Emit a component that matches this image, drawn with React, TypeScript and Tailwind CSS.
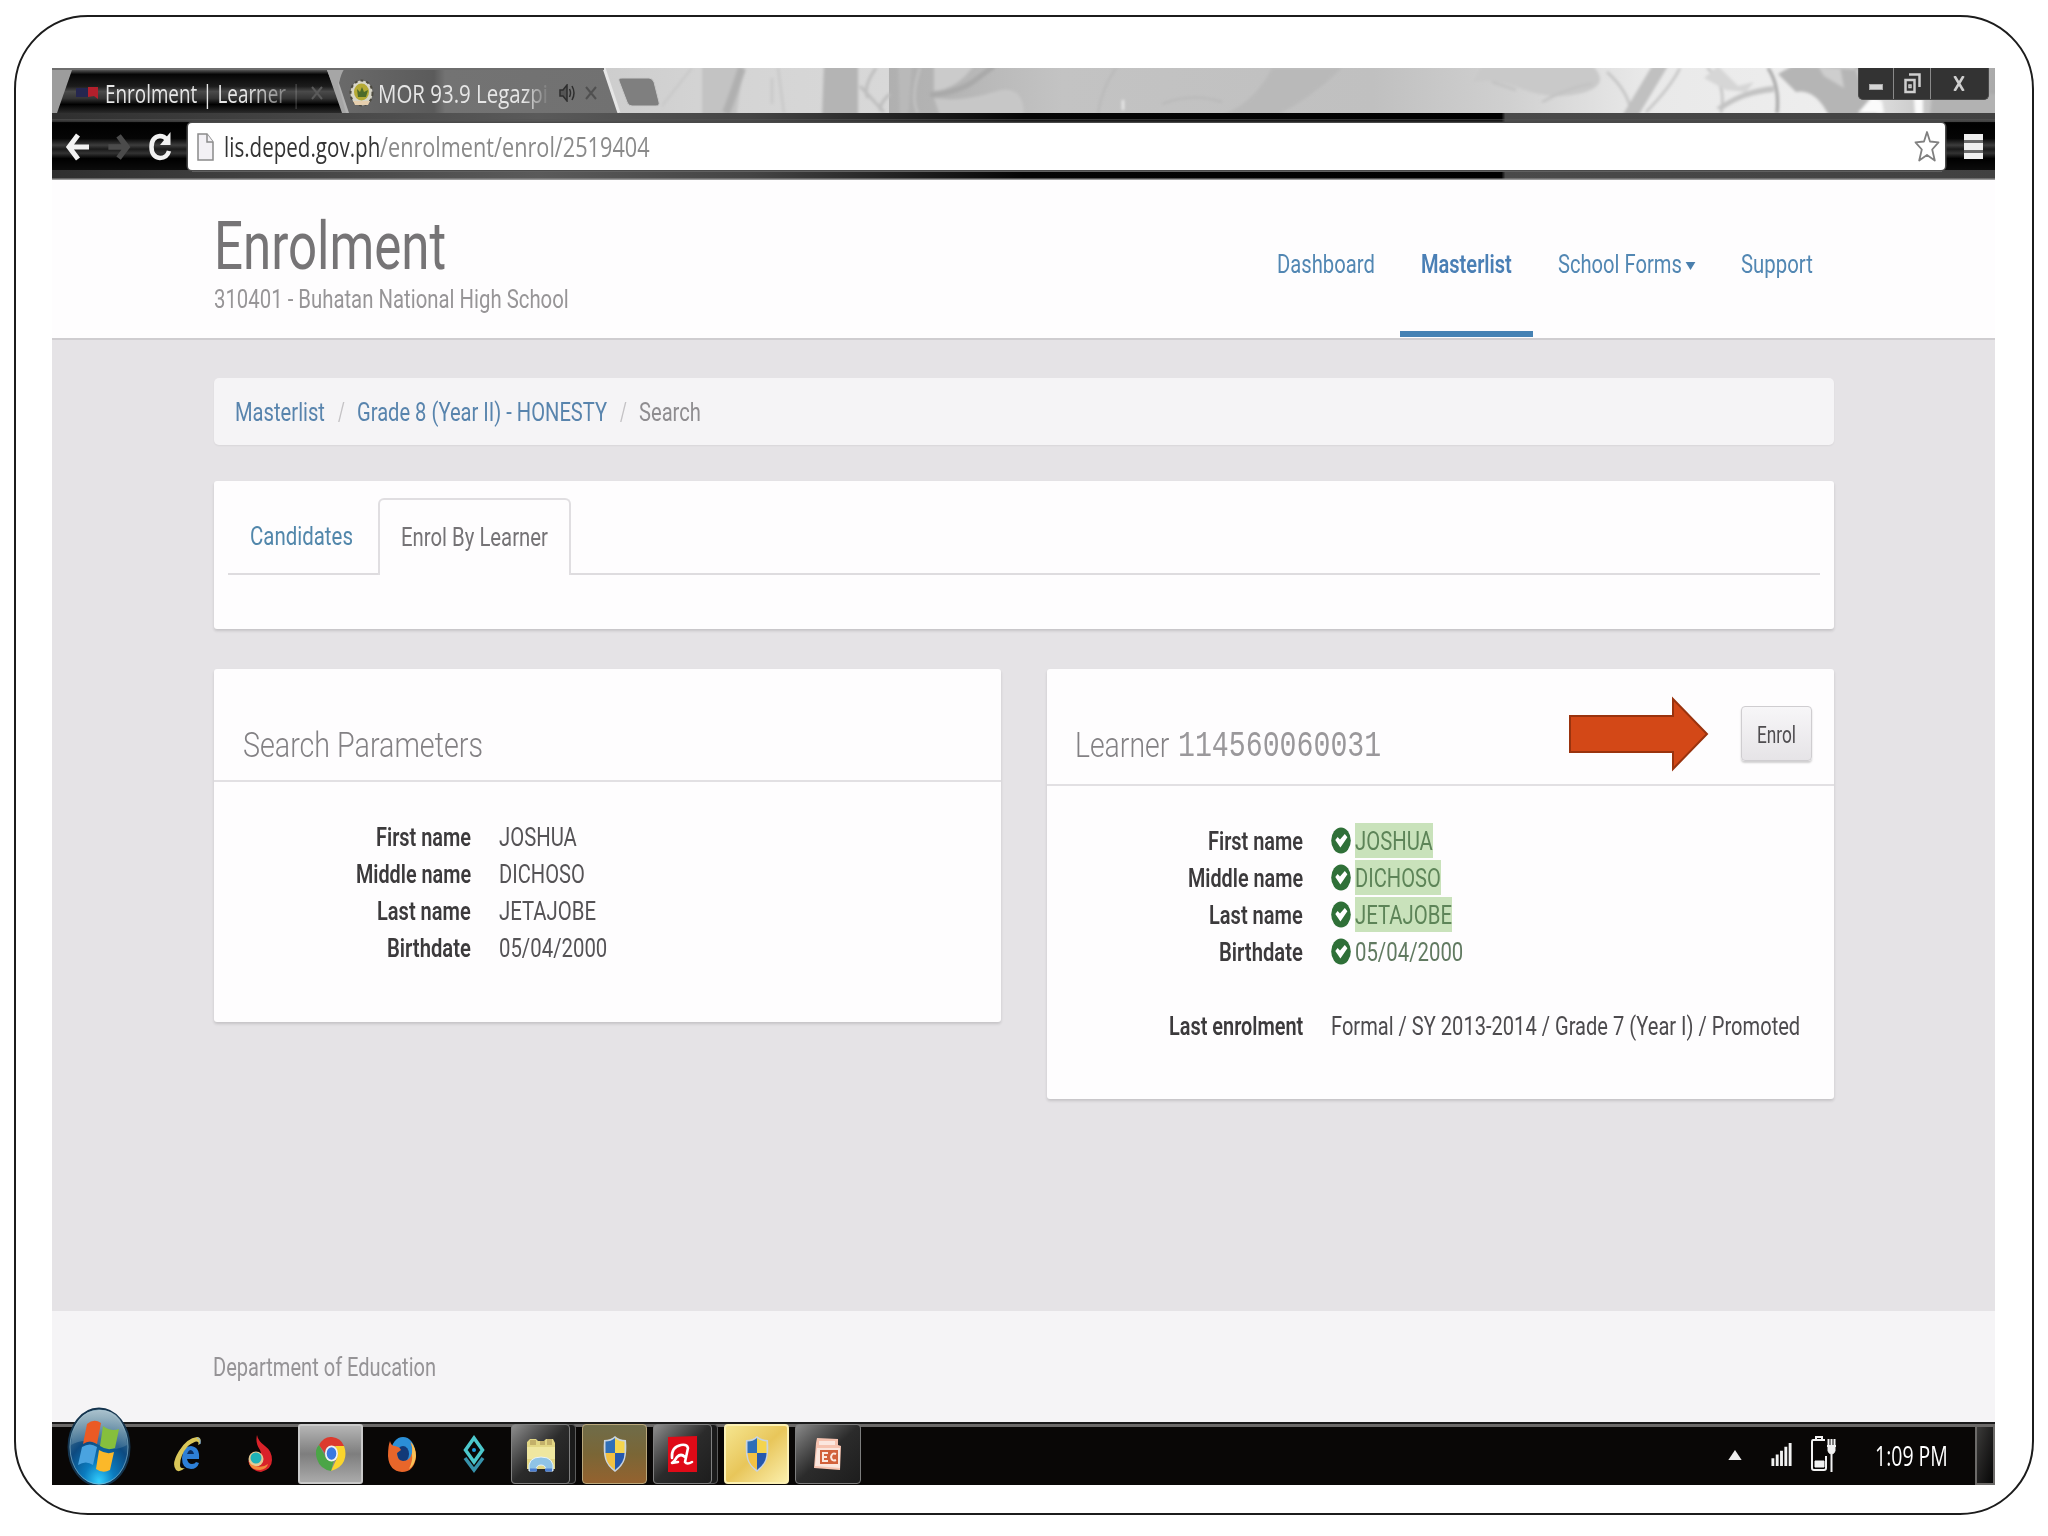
import { useLayoutEffect, useRef, useState } from "react";
import type { ReactNode } from "react";

/** Single line of text condensed horizontally to a given width. */
function Fit({ w, className = "", children }: { w: number; className?: string; children: ReactNode }) {
  const ref = useRef<HTMLSpanElement>(null);
  const [scale, setScale] = useState(1);
  useLayoutEffect(() => {
    if (ref.current && ref.current.offsetWidth) setScale(w / ref.current.offsetWidth);
  }, [w]);
  return (
    <span className={`inline-flex shrink-0 ${className}`} style={{ width: w }}>
      <span ref={ref} className="inline-block shrink-0 origin-left whitespace-nowrap" style={{ transform: `scaleX(${scale})` }}>
        {children}
      </span>
    </span>
  );
}

function TabStripArt() {
  return (
    <svg className="absolute inset-0" width="1943" height="45" viewBox="0 0 1943 45">
      <defs>
        <linearGradient id="strip" x1="0" x2="1">
          <stop offset="0" stopColor="#8f8f8f" />
          <stop offset=".25" stopColor="#c9c9c9" />
          <stop offset=".34" stopColor="#d4d4d4" />
          <stop offset=".4305" stopColor="#d8d8d8" />
          <stop offset=".431" stopColor="#b0b0b0" />
          <stop offset=".46" stopColor="#b4b4b4" />
          <stop offset=".52" stopColor="#c3c3c3" />
          <stop offset=".68" stopColor="#c0c0c0" />
          <stop offset=".75" stopColor="#d0d0d0" />
          <stop offset=".82" stopColor="#e9e9e9" />
          <stop offset=".92" stopColor="#eeeeee" />
          <stop offset="1" stopColor="#a9a9a9" />
        </linearGradient>
        <linearGradient id="tabA" x1="0" x2="0" y1="0" y2="1">
          <stop offset="0" stopColor="#555" />
          <stop offset=".1" stopColor="#050505" />
          <stop offset=".38" stopColor="#1c1c1c" />
          <stop offset=".5" stopColor="#4a4a4a" />
          <stop offset=".66" stopColor="#343434" />
          <stop offset=".8" stopColor="#000" />
          <stop offset="1" stopColor="#2b2b2b" />
        </linearGradient>
        <linearGradient id="tabB" x1="0" x2="1">
          <stop offset="0" stopColor="#6a6a6a" />
          <stop offset=".34" stopColor="#5b5b5b" />
          <stop offset=".38" stopColor="#737373" />
          <stop offset="1" stopColor="#717171" />
        </linearGradient>
        <filter id="soft" x="-5%" y="-20%" width="110%" height="140%">
          <feGaussianBlur stdDeviation="1.5" />
        </filter>
      </defs>
      <rect width="1943" height="45" fill="url(#strip)" />
      <g filter="url(#soft)" fill="none">
        <path d="M650 -4h42l-8 53h-34z" fill="#c3c3c3" />
        <path d="M772 -4h34v53h-36z" fill="#b4b4b4" />
        <path d="M846 -4h14l-4 53h-8z" fill="#b9b9b9" />
        <path d="M640 0q-20 25-30 38M720 10v26M726 0l6 45M868 0q-10 30-2 45" stroke="#c6c6c6" strokeWidth="2" />
        <path d="M690 0q-10 30-16 45" stroke="#b0b0b0" strokeWidth="8" />
        <path d="M808 18l24 26M824 0q-14 20-8 30M838 26q-10 8-10 17" stroke="#bdbdbd" strokeWidth="3" />
        <path d="M882 -3h40q-16 24-40 26z" fill="#cbcbcb" />
        <path d="M882 30q30 4 60-6t30 24h-84z" fill="#c7c7c7" />
        <path d="M878 27Q910 24 926 10L942 -2" stroke="#a9a9a9" strokeWidth="5" />
        <path d="M1064 0q-14 20-18 45M1110 36q30-12 60-2" stroke="#b8b8b8" strokeWidth="2" />
        <path d="M1071 32v10" stroke="#f4f4f4" strokeWidth="2" />
        <path d="M1220 0q-20 40-60 50h60q40-20 70-50z" fill="#b9b9b9" />
        <path d="M1430 -3h110q20 20-10 28t-60-4-50-6z" fill="#c9c9c9" />
        <path d="M1440 14l24 8M1490 34q30-16 50-18M1555 4q22 20 24 41M1612 0q-14 28-32 45M1628 0q-10 20-34 44M1655 0q20 14 14 45" stroke="#c2c2c2" strokeWidth="2.5" />
        <path d="M1600 -2h16l-30 50h-16z" fill="#c0c0c0" />
        <path d="M1664 40q28-20 58-22v6q-30 2-52 18z" fill="#c2c2c2" />
        <path d="M1652 10l14-12 20 20 16-4-8 10-20-2z" fill="#d6d6d6" />
        <path d="M1716 0q12 18 9 45" stroke="#a2a2a2" strokeWidth="3" />
        <path d="M1726 6l14-8h70l16 52h-48q-14-30-34-26z" fill="#b5b5b5" />
        <path d="M1752 -2h14l6 10 20 12-4-22h14l10 24 10-30h40v12h-20z" fill="#d9d9d9" opacity=".7" />
        <path d="M1806 45l14-16 10 4 2 12zM1862 30h9v18h-8z" fill="#fbfbfb" />
        <path d="M1880 26h70v22h-72z" fill="#b2b2b2" />
      </g>
      <path d="M0 45V0h22L6 45z" fill="#9c9c9c" />
      <path d="M5 45L20 2h255l17 43z" fill="url(#tabA)" />
      <path d="M275 2h18q-5 6-7 14l8 29h-4z" fill="#a6a6a6" />
      <path d="M286 0h266l16 45H297l-10-30q2-10 6-15z" fill="url(#tabB)" />
      <path d="M552 0l15 45" stroke="#e6e6e6" strokeWidth="3" />
      <path d="M567 13q-1-3 3-3h27q3 0 5 4l5 20q1 4-3 4h-24q-4 0-5-4z" fill="#7f7f7f" stroke="#c9c9c9" />
      <rect width="552" height="2" fill="#6e6e6e" />
    </svg>
  );
}

function ToolbarArt() {
  return (
    <svg className="absolute inset-0" width="1943" height="67" viewBox="0 0 1943 67" preserveAspectRatio="none">
      <defs>
        <linearGradient id="tb" x1="0" x2="0" y1="0" y2="1">
          <stop offset="0" stopColor="#3a3a3a" />
          <stop offset=".1" stopColor="#111" />
          <stop offset=".16" stopColor="#000" />
          <stop offset=".38" stopColor="#050505" />
          <stop offset=".48" stopColor="#3d3d3d" />
          <stop offset=".54" stopColor="#1a1a1a" />
          <stop offset=".6" stopColor="#333" />
          <stop offset=".68" stopColor="#000" />
          <stop offset=".93" stopColor="#111" />
          <stop offset="1" stopColor="#444" />
        </linearGradient>
        <linearGradient id="tbTop" x1="0" x2="1">
          <stop offset="0" stopColor="#2f2f2f" />
          <stop offset=".25" stopColor="#5a5a5a" />
          <stop offset=".36" stopColor="#444" />
          <stop offset=".5" stopColor="#050505" />
          <stop offset=".746" stopColor="#000" />
          <stop offset=".748" stopColor="#4a4a4a" />
          <stop offset="1" stopColor="#414141" />
        </linearGradient>
      </defs>
      <rect width="1943" height="67" fill="url(#tb)" />
      <rect width="1943" height="9" fill="url(#tbTop)" />
      <rect y="6" width="1943" height="1.5" fill="#555" opacity=".6" />
      <rect y="57" x="0" width="1943" height="9" fill="url(#tbTop)" />
      <rect y="57" x="140" width="1750" height="2" fill="#777" />
      <rect y="65.5" width="1943" height="1.5" fill="#999" />
    </svg>
  );
}

function WindowsOrb() {
  return (
    <svg className="absolute left-[15px] -top-[17px]" width="64" height="80" viewBox="0 0 64 80">
      <defs>
        <radialGradient id="orb" cx=".5" cy=".95" r=".85">
          <stop offset="0" stopColor="#33d0ff" />
          <stop offset=".3" stopColor="#0b7cc0" />
          <stop offset=".65" stopColor="#0d4a80" />
          <stop offset="1" stopColor="#51788f" />
        </radialGradient>
        <linearGradient id="orbTop" x1="0" x2="0" y1="0" y2="1">
          <stop offset="0" stopColor="#b9ced8" stopOpacity=".85" />
          <stop offset="1" stopColor="#7fa5b8" stopOpacity=".25" />
        </linearGradient>
      </defs>
      <ellipse cx="32" cy="40" rx="30.5" ry="38.5" fill="url(#orb)" stroke="#14344e" strokeWidth="2" />
      <ellipse cx="32" cy="40" rx="29" ry="37" fill="none" stroke="#8fb9cc" strokeOpacity=".6" />
      <path d="M4 38Q6 4 32 3t28 35Q46 46 32 38T4 38z" fill="url(#orbTop)" />
      <path d="M20 17q7-6 14-1l-4 21q-7-5-14 0z" fill="#ea5a24" />
      <path d="M36 19q8 6 16 3l-4 19q-8 3-15-2z" fill="#86bf3c" />
      <path d="M15 40q8-5 15 0l-4 18q-7-5-15 0z" fill="#4aa3e0" />
      <path d="M32 43q8 5 15 2l-4 18q-7 4-14-1z" fill="#fbb829" />
    </svg>
  );
}

function IeIcon() {
  return (
    <svg width="32" height="38" viewBox="0 0 32 38">
      <path d="M26 24H14q1 5 5 5 3 0 4-2l3 1q-2 6-8 6-9 0-9-11 1-12 9-12 9 1 8 13z" fill="#2d7fd6" />
      <path d="M14 19h7q-1-4-4-4-2 1-3 4z" fill="#0b2c5c" />
      <path d="M27 9q2-7-3-7Q14 3 6 16T3 35q3 3 9-2-5 1-5-3Q7 20 15 11q8-6 10-4 1 1 0 3z" fill="#d9c658" />
      <path d="M27 9q1-6-3-6" fill="none" stroke="#7fb2e8" />
    </svg>
  );
}

function FlameIcon() {
  return (
    <svg width="26" height="38" viewBox="0 0 26 38">
      <path d="M10 0q1 6 8 11t7 14-11 12Q3 36 1 25q4 6 8 4 8-4 4-14Q8 8 10 0z" fill="#d92229" />
      <circle cx="9" cy="24" r="7.5" fill="#e4c994" />
      <circle cx="9" cy="23" r="5.5" fill="#1eb3b8" />
      <path d="M2 28q2 7 11 7 7-1 8-6-8 6-19-1z" fill="#f28b3c" />
    </svg>
  );
}

function ChromeIcon() {
  return (
    <svg width="30" height="36" viewBox="0 0 30 36">
      <path d="M3 9Q8 0 16 1q9 1 12 9H15q-6 1-6 7z" fill="#dc3a2e" />
      <path d="M28 10q3 8 0 15t-13 10l6-13q2-6-2-12z" fill="#fad52d" />
      <path d="M3 9l7 13q4 4 8 2l-3 11Q4 33 1 23T3 9z" fill="#4ba547" />
      <ellipse cx="15.500" cy="17.500" rx="6.500" ry="8" fill="#f3f3f3" />
      <ellipse cx="15.500" cy="17.500" rx="4.800" ry="6.200" fill="#3a78e0" />
    </svg>
  );
}

function FirefoxIcon() {
  return (
    <svg width="30" height="37" viewBox="0 0 30 37">
      <ellipse cx="16" cy="16" rx="12" ry="15" fill="#2b8fd6" />
      <ellipse cx="16" cy="18" rx="6" ry="8" fill="#123a78" />
      <path d="M3 5q1 5 5 5 5 1 6 4l-4 3q0 7 6 8 7 0 9-8 1-6-2-11 6 5 6 15-2 15-14 15Q2 35 1 20 1 10 3 5z" fill="#e8662a" />
      <path d="M24 6q5 6 5 14-1 9-7 13 4-8 3-15 1-6-1-12z" fill="#f9c257" />
    </svg>
  );
}

function DiamondIcon() {
  return (
    <svg width="24" height="38" viewBox="0 0 24 38" fill="none">
      <path d="M12 3l8.500 12L12 27 3.500 15z" stroke="#4cc8cc" strokeWidth="3.500" />
      <circle cx="12" cy="15" r="2" fill="#1a9ee0" />
      <path d="M3 23l9 12 9-12" stroke="#3692ab" strokeWidth="3.500" />
    </svg>
  );
}

function FolderIcon() {
  return (
    <svg width="32" height="36" viewBox="0 0 32 36">
      <path d="M2 6l3-3h6l2 2h6l2-2h7l2 4v26H2z" fill="#e2d684" />
      <path d="M5 4h6v5H5zM15 5h5v4h-5zM22 3h5v6h-5z" fill="#c3b06a" />
      <path d="M2 11h28v12H2z" fill="#efe7a0" />
      <path d="M4 35q-2-14 12-14t12 14h-7q0-6-5-6t-5 6z" fill="#8fc3e6" stroke="#e7f3fa" />
      <path d="M5 34h7M20 34h7" stroke="#4c7fd0" strokeWidth="3" />
    </svg>
  );
}

function ShieldIcon() {
  return (
    <svg width="24" height="38" viewBox="0 0 24 38">
      <path d="M12 1q4 4 11 4 1 12-1 19t-10 13Q4 31 2 24T1 5q7 0 11-4z" fill="#c9d4df" />
      <path d="M12 3v15H2.500V6.500Q8 6.500 12 3z" fill="#2f6fb8" />
      <path d="M12 3q4 3.500 9.500 3.500V18H12z" fill="#f4d44e" />
      <path d="M2.500 18H12v17q-7-5-8.500-11z" fill="#f2c143" />
      <path d="M12 18h9.500q0 10-9.500 17z" fill="#2558ae" />
    </svg>
  );
}

function UmbrellaIcon() {
  return (
    <svg width="29" height="38" viewBox="0 0 29 38">
      <path d="M0 2l29-1v36H0z" fill="#df0a17" />
      <path d="M4 23Q3 12 13 10q6-1 7 3l-3 14q2 3 7 0M17 22q-4-4-8 0-3 5-5 6l6-1" fill="none" stroke="#fff" strokeWidth="2.600" strokeLinejoin="round" strokeLinecap="round" />
    </svg>
  );
}

function SlidesIcon() {
  return (
    <svg width="30" height="36" viewBox="0 0 30 36">
      <path d="M4 2l21 1v6l3 1-1 24-26-2L3 7z" fill="#f6c3b0" />
      <path d="M6 5h16v4H6z" fill="#fff" opacity=".6" />
      <path d="M4 12h23v20L2 30z" fill="#fbe6dd" />
      <path d="M7 14h18v14H7z" fill="#d2603a" />
      <path d="M15 17h-5v8h5M10 21h4M23 18q-4-2-5 3 1 5 5 3" fill="none" stroke="#fbe6dd" strokeWidth="2" />
    </svg>
  );
}

function CheckBadge() {
  return (
    <svg className="shrink-0" width="20" height="27" viewBox="0 0 20 27">
      <ellipse cx="10" cy="13.500" rx="9.800" ry="13" fill="#2f7038" />
      <path d="M4.300 13l2.300-3 2.400 2.600 4.800-5.600 2.600 3.300-7 10.200z" fill="#fff" />
    </svg>
  );
}

function StackedButton({ children }: { children: ReactNode }) {
  return (
    <div className="mx-[3px] flex h-[60px] w-[65px] rounded-[4px] border border-[#5c5c5c] bg-[#1b1b1b]">
      <div className="-m-px flex h-[60px] w-[59px] items-center justify-center rounded-[4px] border border-[#808080] bg-linear-to-br from-[#8f8f8f] via-[#2b2b2b] to-[#1d1d1d]">
        {children}
      </div>
    </div>
  );
}

function Taskbar() {
  return (
    <div className="relative flex h-[63px] shrink-0 items-start border-t-2 border-[#1b1b1b] bg-[#090706]">
      <div className="absolute inset-x-0 top-0 h-[3px] bg-[#6b6968]" />
      <WindowsOrb />
      <div className="relative ml-[101px] flex">
        <div className="flex h-[60px] w-[71px] items-center justify-center"><IeIcon /></div>
        <div className="flex h-[60px] w-[71px] items-center justify-center"><FlameIcon /></div>
        <div className="mx-[3px] flex h-[60px] w-[65px] items-center justify-center rounded-[3px] border-2 border-[#c9c9c9] bg-linear-to-b from-[#b5b5b5] via-[#7e7e7e] to-[#aaaaaa]">
          <ChromeIcon />
        </div>
        <div className="flex h-[60px] w-[71px] items-center justify-center"><FirefoxIcon /></div>
        <div className="flex h-[60px] w-[74px] items-center justify-center"><DiamondIcon /></div>
        <div className="-ml-[3px] flex">
          <StackedButton><FolderIcon /></StackedButton>
          <div className="mx-[3px] flex h-[60px] w-[65px] items-center justify-center rounded-[4px] border border-[#b9a77c] bg-linear-to-b from-[#6f6c49] via-[#7a6636] to-[#94622f]">
            <ShieldIcon />
          </div>
          <StackedButton><UmbrellaIcon /></StackedButton>
          <div className="mx-[3px] flex h-[60px] w-[65px] items-center justify-center rounded-[4px] border-2 border-[#fbf0b4] bg-linear-to-br from-[#f5e58e] via-[#e8c65a] to-[#fbefaa]">
            <ShieldIcon />
          </div>
          <div className="mx-[3px] flex h-[60px] w-[66px] items-center justify-center rounded-[4px] border border-[#7d7d7d] bg-linear-to-br from-[#8a8a8a] via-[#2b2b2b] to-[#1d1d1d]">
            <SlidesIcon />
          </div>
        </div>
      </div>
      <div className="ml-auto flex h-[61px] items-center text-white">
        <svg className="mr-[29px]" width="14" height="10" viewBox="0 0 16 12"><path d="M8 0l8 12H0z" fill="#eee" /></svg>
        <svg className="mr-[19px]" width="21" height="23" viewBox="0 0 21 24" fill="#f2f2f2">
          <path d="M0 16h3v8H0zM4.500 12h3v12h-3zM9 8h3v16H9zM13.500 4h3v20h-3zM18 0h3v24h-3z" />
        </svg>
        <svg className="mr-[38px]" width="26" height="37" viewBox="0 0 26 37" fill="none" stroke="#f2f2f2">
          <path d="M14 4H2q-1 0-1 2v26q0 2 2 2h10q2 0 2-2V20" strokeWidth="2" />
          <path d="M5 3V1h6v2" strokeWidth="2" />
          <path d="M4 25h9v6H4z" fill="#f2f2f2" />
          <path d="M16 10h9M17.500 3v6M20.500 3v6M23.500 3v6M20.500 18v18" strokeWidth="2" />
          <path d="M17 11h7v4q-1 3-3.500 3T17 15z" fill="#f2f2f2" />
        </svg>
        <Fit w={73} className="mr-[27px] pt-px font-['Open_Sans'] text-[28px] leading-[60px]">1:09 PM</Fit>
        <div className="h-[60px] w-[20px] border-2 border-[#6c6a68] bg-linear-to-br from-[#3c3b3a] to-[#070707]" />
      </div>
    </div>
  );
}

function Row({ label, labelW, children }: { label: string; labelW: number; children: ReactNode }) {
  return (
    <div className="flex h-[37px] items-center">
      <div className="flex w-[257px] justify-end text-[#3c3a3c]">
        <Fit w={labelW} className="font-semibold">{label}</Fit>
      </div>
      <div className="ml-[28px] flex items-center text-[#555356]">{children}</div>
    </div>
  );
}

const person = [
  { label: "First name", labelW: 95, value: "JOSHUA", valueW: 78, mark: true },
  { label: "Middle name", labelW: 115, value: "DICHOSO", valueW: 86, mark: true },
  { label: "Last name", labelW: 94, value: "JETAJOBE", valueW: 97, mark: true },
  { label: "Birthdate", labelW: 84, value: "05/04/2000", valueW: 108, mark: false },
];

const cardShadow = "shadow-[0_2px_3px_rgba(0,0,0,0.14)]";

export default function App() {
  return (
    <div className="h-[1536px] w-[2048px] overflow-hidden bg-white pt-[15px] pl-[14px] font-['Roboto']">
      <div className="h-[1500px] w-[2020px] rounded-[74px] border-2 border-[#1c1c1c] pt-[51px] pl-[36px]">
        <div className="flex h-[1417px] w-[1943px] flex-col overflow-hidden bg-[#fefdfe]">
          {/* Tab strip */}
          <div className="relative h-[45px] shrink-0">
            <TabStripArt />
            <div className="relative flex h-[45px] items-center pt-[4px] font-['Open_Sans'] text-[26px] leading-[40px] text-[#e6e6e6]">
              <svg className="ml-[24px]" width="24" height="14" viewBox="0 0 24 14">
                <path d="M0 2h12v9H0z" fill="#25264f" />
                <path d="M12 1h10v12l-4-3-6 1z" fill="#b3202c" />
              </svg>
              <div className="ml-[5px] flex w-[204px] mask-r-from-70% mask-r-to-100%">
                <Fit w={196}>Enrolment | Learner |</Fit>
              </div>
              <svg className="ml-[2px]" width="12" height="14" viewBox="0 0 12 14"><path d="M1 1l10 12M11 1L1 13" stroke="#5a5a5a" strokeWidth="2" /></svg>
              <svg className="ml-[26px]" width="25" height="28" viewBox="0 0 25 28">
                <ellipse cx="12.500" cy="14" rx="11" ry="12.500" fill="#d8d6c8" stroke="#4c4a40" strokeDasharray="3 3" strokeWidth="2" />
                <ellipse cx="12.500" cy="13" rx="7.500" ry="8.500" fill="#b5aa35" />
                <path d="M8 10l3 3 2-5 2 5 4-2-2 7H9z" fill="#4d6a2a" />
                <path d="M4 22h17l-2 4H6z" fill="#e6cfae" />
              </svg>
              <div className="ml-[4px] flex w-[172px] mask-r-from-85% mask-r-to-100%">
                <Fit w={170}>MOR 93.9 Legazpi</Fit>
              </div>
              <svg className="ml-[9px]" width="16" height="18" viewBox="0 0 16 18" fill="none" stroke="#2e2e2e" strokeWidth="1.500">
                <path d="M1 6h3l4-5v16l-4-5H1z" fill="#555" />
                <path d="M10.500 5q2 4 0 8M13 2q4 7 0 14" />
              </svg>
              <svg className="ml-[10px]" width="12" height="14" viewBox="0 0 12 14"><path d="M1 1l10 12M11 1L1 13" stroke="#505050" strokeWidth="2" /></svg>
              <div className="-mt-[18px] mr-[6px] ml-auto flex h-[32px] w-[131px] rounded-b-[5px] border border-t-0 border-[#4a4a4a] bg-[#333]">
                <div className="flex w-[35px] items-center justify-center border-r border-[#8a8a8a] pt-[8px]">
                  <div className="h-[6px] w-[14px] border border-[#aaa] bg-[#d5d5d5]" />
                </div>
                <div className="flex w-[37px] items-center justify-center border-r border-[#8a8a8a]">
                  <svg width="17" height="21" viewBox="0 0 17 21" fill="none" stroke="#cfcfcf" strokeWidth="2.500">
                    <path d="M5 1.500h10.500V14" />
                    <path d="M1.500 7h9v12h-9z" />
                    <path d="M5 12h2v2.500H5z" strokeWidth="1.500" />
                  </svg>
                </div>
                <div className="flex flex-1 items-center justify-center pr-[2px]">
                  <svg width="12" height="15" viewBox="0 0 12 15"><path d="M1.500 0l9 15M10.500 0l-9 15" stroke="#cfcfcf" strokeWidth="2.600" /></svg>
                </div>
              </div>
            </div>
          </div>

          {/* Toolbar */}
          <div className="relative h-[67px] shrink-0">
            <ToolbarArt />
            <div className="relative flex h-[67px] items-center">
              <svg className="ml-[13px]" width="24" height="28" viewBox="0 0 24 28" fill="none" stroke="#f2f2f2" strokeWidth="5">
                <path d="M13 2L4 14l9 12M4 14h20" />
              </svg>
              <svg className="ml-[18px]" width="25" height="26" viewBox="0 0 24 28" fill="none" stroke="#4b4b4b" strokeWidth="6">
                <path d="M11 2l9 12-9 12M20 14H0" />
              </svg>
              <svg className="ml-[16px]" width="24" height="30" viewBox="0 0 24 30">
                <path d="M19 7.500Q16 4 12 4 3.500 5 3.500 15T12 26q7 0 9-7" fill="none" stroke="#f2f2f2" strokeWidth="4.500" />
                <path d="M22.500 0v13H12z" fill="#f2f2f2" />
              </svg>
              <div className="ml-[16px] flex h-[47px] w-[1757px] items-center rounded-[4px] bg-white shadow-[0_0_0_1.5px_#4a4a4a]">
                <svg className="ml-[9px]" width="17" height="28" viewBox="0 0 17 28" fill="#f3f1f5" stroke="#8b8b8b" strokeWidth="1.500">
                  <path d="M1 1h9l6 8v18H1z" />
                  <path d="M10 1v8h6" />
                </svg>
                <div className="ml-[10px] flex font-['Open_Sans'] text-[26.500px] leading-[46px] text-[#333]">
                  <Fit w={156}>lis.deped.gov.ph</Fit>
                  <Fit w={270} className="text-[#8a8a8a]">/enrolment/enrol/2519404</Fit>
                </div>
                <svg className="mr-[5px] ml-auto" width="26" height="33" viewBox="0 0 26 33">
                  <path d="M13 2l3 9.500 8.500.8-6.300 7.200 2.600 11L13 25l-7.800 5.500 2.600-11L1.500 12.300l8.500-.8z" fill="#fff" stroke="#808080" strokeWidth="1.800" strokeLinejoin="round" />
                </svg>
              </div>
              <div className="ml-[19px] flex flex-col gap-[3px] bg-[#6a6a6a]">
                <div className="h-[6.500px] w-[19px] bg-[#efefef]" />
                <div className="h-[6.500px] w-[19px] bg-[#efefef]" />
                <div className="h-[6.500px] w-[19px] bg-[#efefef]" />
              </div>
            </div>
          </div>

          {/* Page header */}
          <header className="flex h-[160px] shrink-0 items-start justify-between border-b-2 border-[#cfcdd0] pr-[160px] pl-[162px]">
            <div className="flex flex-col pt-[34px]">
              <Fit w={232} className="text-[66px] leading-[66px] text-[#767476]">Enrolment</Fit>
              <Fit w={355} className="mt-[4px] text-[25.500px] leading-[30px] text-[#979597]">310401 - Buhatan National High School</Fit>
            </div>
            <nav className="flex h-[158px] text-[26px] leading-[30px] text-[#5287b3]">
              <div className="w-[146px] pt-[69px] pl-[23px]"><Fit w={98}>Dashboard</Fit></div>
              <div className="-mt-px h-[158px] w-[133px] border-b-[6px] border-[#4682b4] pt-[70px] pl-[21px] text-[#4a7fb5]"><Fit w={91} className="font-semibold">Masterlist</Fit></div>
              <div className="flex w-[185px] pt-[69px] pl-[25px]">
                <Fit w={124}>School Forms</Fit>
                <svg className="mt-[13px] ml-[3px]" width="11" height="8" viewBox="0 0 11 9"><path d="M0 0h11L5.500 9z" fill="#4a7fad" /></svg>
              </div>
              <div className="w-[117px] pt-[69px] pl-[23px]"><Fit w={72}>Support</Fit></div>
            </nav>
          </header>

          {/* Page body */}
          <main className="h-[971px] shrink-0 bg-[#e5e3e6] pt-[38px] pr-[161px] pl-[162px] text-[26px] leading-[36px]">
            <div className="flex h-[67px] items-center rounded-[5px] bg-[#f5f4f6] pl-[21px] text-[#5884ad] shadow-[0_1px_2px_rgba(0,0,0,0.06)]">
              <Fit w={90}>Masterlist</Fit>
              <Fit w={7} className="ml-[13px] text-[#c4c2c5]">/</Fit>
              <Fit w={250} className="ml-[12px]">Grade 8 (Year II) - HONESTY</Fit>
              <Fit w={7} className="ml-[13px] text-[#c4c2c5]">/</Fit>
              <Fit w={62} className="ml-[12px] text-[#8f8d90]">Search</Fit>
            </div>

            <div className={`mt-[36px] h-[148px] rounded-[3px] bg-[#fefdfe] px-[14px] pt-[17px] ${cardShadow}`}>
              <div className="flex h-[77px] border-b-2 border-[#dedcdf]">
                <div className="flex w-[150px] items-center pt-px pl-[22px] text-[#5287ab]"><Fit w={103}>Candidates</Fit></div>
                <div className="flex h-[77px] w-[193px] items-center rounded-t-[6px] border-2 border-b-0 border-[#e0dee1] bg-[#fefdfe] pb-[2px] pl-[21px] text-[#757376]">
                  <Fit w={147}>Enrol By Learner</Fit>
                </div>
              </div>
            </div>

            <div className="mt-[40px] flex items-start justify-between">
              <section className={`h-[353px] w-[787px] rounded-[3px] bg-[#fefdfe] ${cardShadow}`}>
                <div className="h-[113px] border-b-2 border-[#e2e0e3] pt-[57px] pl-[29px]">
                  <Fit w={240} className="text-[35px] leading-[40px] font-light text-[#838184]">Search Parameters</Fit>
                </div>
                <div className="pt-[36px]">
                  {person.map((p) => (
                    <Row key={p.label} label={p.label} labelW={p.labelW}>
                      <Fit w={p.valueW}>{p.value}</Fit>
                    </Row>
                  ))}
                </div>
              </section>

              <section className={`relative h-[430px] w-[787px] rounded-[3px] bg-[#fefdfe] ${cardShadow}`}>
                <div className="flex h-[117px] items-start border-b-2 border-[#e2e0e3] pr-[22px] pl-[28px] text-[#838184]">
                  <Fit w={94} className="mt-[57px] text-[35px] leading-[40px] font-light">Learner</Fit>
                  <Fit w={203} className="mt-[58px] ml-[9px] font-['Liberation_Mono'] text-[36px] leading-[40px] text-[#9a989b]">114560060031</Fit>
                  <button className="mt-[37px] ml-auto flex h-[55px] w-[71px] items-center justify-center rounded-[4px] border border-[#cfcdd0] bg-linear-to-b from-[#f7f6f8] to-[#e6e4e7] text-[23px] leading-[30px] text-[#4f4d50] shadow-[0_2px_2px_rgba(0,0,0,0.18)]">
                    <Fit w={39} className="pt-[4px]">Enrol</Fit>
                  </button>
                </div>
                <svg className="absolute top-[27px] left-[521px]" width="142" height="76" viewBox="0 0 142 76">
                  <path d="M2 20h103V3l34 35-34 35V56H2z" fill="#d34817" stroke="#9a330e" strokeWidth="2" />
                </svg>
                <div className="-ml-px pt-[36px]">
                  {person.map((p) => (
                    <Row key={p.label} label={p.label} labelW={p.labelW}>
                      <CheckBadge />
                      {p.mark ? (
                        <span className="ml-[4px] flex h-[35px] items-center bg-[#c9e2bb] text-[#5d8458]"><Fit w={p.valueW}>{p.value}</Fit></span>
                      ) : (
                        <Fit w={p.valueW} className="ml-[4px] text-[#617a61]">{p.value}</Fit>
                      )}
                    </Row>
                  ))}
                  <div className="h-[37px]" />
                  <Row label="Last enrolment" labelW={134}>
                    <Fit w={469} className="text-[#4d4b4e]">Formal / SY 2013-2014 / Grade 7 (Year I) / Promoted</Fit>
                  </Row>
                </div>
              </section>
            </div>
          </main>

          <footer className="flex h-[111px] shrink-0 items-center bg-[#f5f4f6] pl-[161px] text-[26px] leading-[30px] text-[#959396]">
            <Fit w={223}>Department of Education</Fit>
          </footer>

          <Taskbar />
        </div>
      </div>
    </div>
  );
}
